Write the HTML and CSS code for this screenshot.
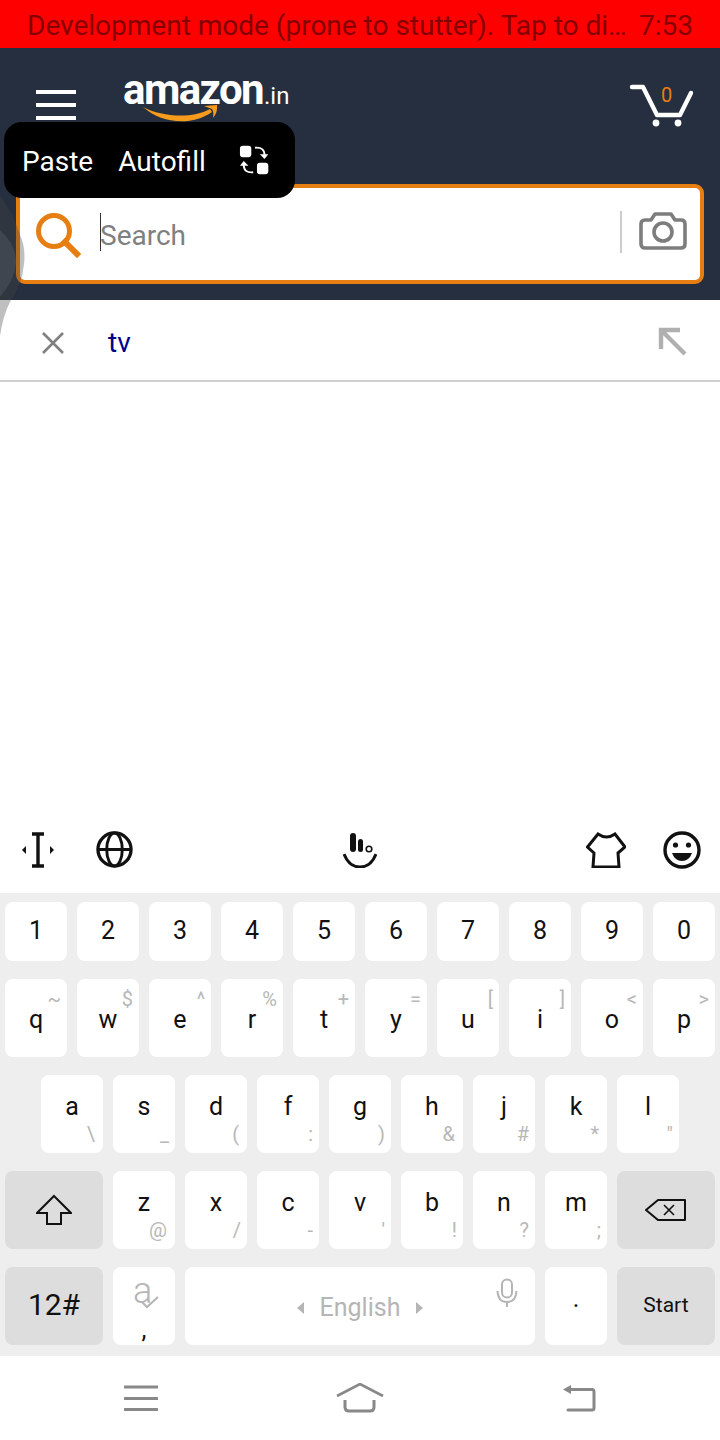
FILE: index.html
```html
<!DOCTYPE html>
<html lang="en">
<head>
<meta charset="utf-8">
<title>Amazon search</title>
<link rel="stylesheet" href="styles.css">
</head>
<body>
<div class="screen">
  <div class="dev-banner"><span class="dev-text">Development mode (prone to stutter). Tap to di…</span><span class="dev-time">7:53</span></div>

  <header class="app-header">
    <div class="top-row">
      <div class="burger"><i></i><i></i><i></i></div>
      <div class="logo">
        <span class="logo-word">amazon</span><span class="logo-in">.in</span>
        <svg class="logo-smile" width="80" height="20" viewBox="0 0 80 20"><path d="M1 4 C20 14 50 16 68 6 L70 9 C50 23 20 21 1 4 Z" fill="#f79b1c"/><path d="M62 3 L75 2 Q76 9 71 15 Q72 9 70 6 Z" fill="#f79b1c"/></svg>
      </div>
      <div class="cart">
        <svg width="64" height="44" viewBox="0 0 64 44"><path d="M3 3 H14 L28 31 H51 L62 9" fill="none" stroke="#fff" stroke-width="4.400" stroke-linecap="round" stroke-linejoin="round"/><circle cx="27" cy="39" r="3.400" fill="#fff"/><circle cx="49" cy="39" r="3.400" fill="#fff"/></svg>
        <span class="cart-count">0</span>
      </div>
    </div>
    <div class="search-box">
      <svg class="search-icon" width="46" height="46" viewBox="0 0 46 46"><circle cx="19" cy="19" r="15.500" fill="none" stroke="#e67e12" stroke-width="5"/><path d="M30 30 L42 42" stroke="#e67e12" stroke-width="6" stroke-linecap="square"/></svg>
      <span class="caret"></span>
      <span class="search-text">Search</span>
      <span class="search-divider"></span>
      <svg class="camera" width="50" height="40" viewBox="0 0 50 40"><path d="M3 13 Q3 9 7 9 H13 L17 3 H33 L37 9 H43 Q47 9 47 13 V33 Q47 37 43 37 H7 Q3 37 3 33 Z" fill="none" stroke="#7d7d7d" stroke-width="3.600" stroke-linejoin="round"/><circle cx="25" cy="21" r="9" fill="none" stroke="#7d7d7d" stroke-width="3.600"/></svg>
    </div>
  </header>

  <svg class="ghost" width="26" height="150" viewBox="0 0 26 150"><path d="M0 5 Q14 25 20 45 Q26 58 24 74 Q22 94 11 110 Q3 125 0 146 Z" fill="#424242" opacity=".34"/><path d="M0 40 Q16 55 16 72 Q15 90 0 107 Z" fill="#c8c8c8" opacity=".11"/></svg>

  <div class="paste-menu">
    <span>Paste</span><span>Autofill</span>
    <svg width="32" height="32" viewBox="0 0 32 32"><rect x="1" y="1" width="12" height="12" rx="3" fill="#fff"/><rect x="19" y="19" width="12" height="12" rx="3" fill="#fff"/><path d="M17 3 Q27 2 27 11" fill="none" stroke="#fff" stroke-width="2"/><path d="M22 10 H31 L27 15 Z" fill="#fff"/><path d="M15 29 Q5 30 5 21" fill="none" stroke="#fff" stroke-width="2"/><path d="M1 22 H10 L5 17 Z" fill="#fff"/></svg>
  </div>

  <div class="suggestion">
    <svg width="24" height="24" viewBox="0 0 24 24"><path d="M2 2 L22 22 M22 2 L2 22" stroke="#808080" stroke-width="2.600"/></svg>
    <span class="suggestion-text">tv</span>
    <svg class="fill-arrow" width="30" height="30" viewBox="0 0 30 30"><path d="M22 3 H3 V22 M3 3 L27 27" fill="none" stroke="#b0b0b0" stroke-width="4.400"/></svg>
  </div>

  <div class="blank"></div>

  <div class="kb-tools">
    <svg class="t-cursor" width="32" height="36" viewBox="0 0 32 36"><path d="M10 2 H22 M10 34 H22 M16 2 V34" fill="none" stroke="#111" stroke-width="3.400"/><path d="M4 14 V22 L0 18 Z M28 14 V22 L32 18 Z" fill="#111"/></svg>
    <svg class="t-globe" width="37" height="37" viewBox="0 0 38 38"><circle cx="19" cy="19" r="17" fill="none" stroke="#111" stroke-width="3.400"/><ellipse cx="19" cy="19" rx="8" ry="17" fill="none" stroke="#111" stroke-width="3"/><path d="M2 19 H36" stroke="#111" stroke-width="3"/></svg>
    <svg class="t-hand" width="34" height="36" viewBox="0 0 34 36"><path d="M10 4 V17" stroke="#111" stroke-width="6" stroke-linecap="round"/><path d="M17.500 9.500 V17.500" stroke="#111" stroke-width="5" stroke-linecap="round"/><circle cx="26" cy="17" r="2.800" fill="none" stroke="#111" stroke-width="1.600"/><path d="M1 22 Q6 35 17 35 Q28 35 33 22" fill="none" stroke="#111" stroke-width="3"/></svg>
    <svg class="t-shirt" width="40" height="36" viewBox="0 0 40 36"><path d="M1.500 15 L12 2 Q20.500 8 29 2 L39 15 L32 21 L33 35 H7 L8 21 Z" fill="none" stroke="#111" stroke-width="3"/></svg>
    <svg class="t-smile" width="38" height="38" viewBox="0 0 38 38"><circle cx="19" cy="19" r="17" fill="none" stroke="#111" stroke-width="3.400"/><circle cx="12.500" cy="14" r="2.600" fill="#111"/><circle cx="25.500" cy="14" r="2.600" fill="#111"/><path d="M9 22 H29 Q26 30 19 30 Q12 30 9 22 Z" fill="#111"/></svg>
  </div>

  <div class="keyboard">
    <div class="kb-row">
      <div class="key num">1</div><div class="key num">2</div><div class="key num">3</div><div class="key num">4</div><div class="key num">5</div><div class="key num">6</div><div class="key num">7</div><div class="key num">8</div><div class="key num">9</div><div class="key num">0</div>
    </div>
    <div class="kb-row tall">
      <div class="key up">q<span class="sub top">~</span></div>
      <div class="key up">w<span class="sub top">$</span></div>
      <div class="key up">e<span class="sub top">^</span></div>
      <div class="key up">r<span class="sub top">%</span></div>
      <div class="key up">t<span class="sub top">+</span></div>
      <div class="key up">y<span class="sub top">=</span></div>
      <div class="key up">u<span class="sub top">[</span></div>
      <div class="key up">i<span class="sub top">]</span></div>
      <div class="key up">o<span class="sub top">&lt;</span></div>
      <div class="key up">p<span class="sub top">&gt;</span></div>
    </div>
    <div class="kb-row tall inset">
      <div class="key">a<span class="sub bottom far">\</span></div>
      <div class="key">s<span class="sub bottom">_</span></div>
      <div class="key">d<span class="sub bottom far">(</span></div>
      <div class="key">f<span class="sub bottom">:</span></div>
      <div class="key">g<span class="sub bottom">)</span></div>
      <div class="key">h<span class="sub bottom far">&amp;</span></div>
      <div class="key">j<span class="sub bottom">#</span></div>
      <div class="key">k<span class="sub bottom far">*</span></div>
      <div class="key">l<span class="sub bottom">"</span></div>
    </div>
    <div class="kb-row tall">
      <div class="key wide dark center">
        <svg width="36" height="32" viewBox="0 0 36 32"><path d="M18 2 L35 19 H25 V30 H11 V19 H1 Z" fill="none" stroke="#111" stroke-width="2"/></svg>
      </div>
      <div class="key">z<span class="sub bottom far">@</span></div>
      <div class="key">x<span class="sub bottom">/</span></div>
      <div class="key">c<span class="sub bottom">-</span></div>
      <div class="key">v<span class="sub bottom">'</span></div>
      <div class="key">b<span class="sub bottom">!</span></div>
      <div class="key">n<span class="sub bottom">?</span></div>
      <div class="key">m<span class="sub bottom">;</span></div>
      <div class="key wide dark center">
        <svg width="42" height="24" viewBox="0 0 42 24"><path d="M1 12 L13 2 H40 V22 H13 Z" fill="none" stroke="#111" stroke-width="2" stroke-linejoin="round"/><path d="M19 7 L29 17 M29 7 L19 17" stroke="#111" stroke-width="1.600"/></svg>
      </div>
    </div>
    <div class="kb-row tall">
      <div class="key wide dark sym">12#</div>
      <div class="key accent"><span class="accent-a">a</span><svg class="accent-check" width="18" height="14" viewBox="0 0 18 14"><path d="M1 7 L6 12 L17 2" fill="none" stroke="#b5b5b5" stroke-width="2"/></svg><span class="accent-comma">,</span></div>
      <div class="key space">
        <svg width="8" height="12" viewBox="0 0 8 12"><path d="M7 0 V12 L0 6 Z" fill="#b5b5b5"/></svg>
        <span class="space-label">English</span>
        <svg width="8" height="12" viewBox="0 0 8 12"><path d="M1 0 V12 L8 6 Z" fill="#b5b5b5"/></svg>
        <svg class="mic" width="22" height="30" viewBox="0 0 22 30"><rect x="6" y="1.500" width="10" height="18" rx="5" fill="none" stroke="#b5b5b5" stroke-width="2"/><path d="M1.500 13 Q2 24 11 24 Q20 24 20.500 13 M11 24 V29" fill="none" stroke="#b5b5b5" stroke-width="2"/></svg>
      </div>
      <div class="key">.</div>
      <div class="key wide dark start">Start</div>
    </div>
  </div>

  <nav class="nav-bar">
    <svg width="34" height="26" viewBox="0 0 34 26"><path d="M1 2 H33 M1 13.500 H33 M1 24.500 H33" stroke="#888" stroke-width="3" stroke-linecap="round"/></svg>
    <svg width="48" height="30" viewBox="0 0 48 30"><path d="M1 13 L24 1 L47 13" fill="none" stroke="#888" stroke-width="2.600"/><path d="M9 17 V24 Q9 28 13 28 H34 Q38 28 38 24 V17" fill="none" stroke="#888" stroke-width="3"/></svg>
    <svg width="34" height="28" viewBox="0 0 34 28"><path d="M8 5.500 H30 Q32 5.500 32 8 V24 Q32 26 30 26 H6" fill="none" stroke="#888" stroke-width="3" stroke-linecap="round"/><path d="M9 1 V10 L1 5.500 Z" fill="#888"/></svg>
  </nav>
</div>
</body>
</html>
```
FILE: styles.css
```css
* { box-sizing: border-box; }
html, body { margin: 0; padding: 0; background: #fff; }
body { font-family: Roboto, "Liberation Sans", sans-serif; }
.screen { position: relative; width: 720px; height: 1440px; overflow: hidden; display: flex; flex-direction: column; background: #fff; }

.dev-banner { flex: none; height: 48px; background: #ff0000; color: #850000; display: flex; align-items: center; justify-content: space-between; padding: 3px 27px 0 27px; font-size: 28px; line-height: 44px; white-space: nowrap; }

.app-header { flex: none; height: 252px; background: #252f3f; padding: 30px 16px 0; }
.top-row { display: flex; height: 106px; }
.burger { width: 40px; margin: 12px 0 0 20px; display: flex; flex-direction: column; gap: 9px; }
.burger i { display: block; height: 4px; background: #fff; }
.logo { position: relative; width: 170px; height: 50px; margin-left: 48px; color: #fff; white-space: nowrap; }
.logo-word { font-weight: 700; font-size: 42px; line-height: 30px; letter-spacing: -1.600px; display: inline-block; margin: -3px 1px 0 -1px; }
.logo-in { font-size: 24px; line-height: 30px; font-weight: 400; }
.logo-smile { position: absolute; left: 18px; top: 25px; }
.cart { position: relative; width: 64px; height: 44px; margin: 6px 11px 0 auto; }
.cart svg { display: block; }
.cart-count { position: absolute; left: 32px; top: -1px; color: #e67e12; font-size: 20px; line-height: 24px; }

.search-box { height: 100px; background: #fff; border: 4px solid #e67e12; border-radius: 9px; display: flex; align-items: center; padding: 0 12px 0 15px; }
.search-icon { flex: none; margin-top: 2px; }
.caret { flex: none; width: 1px; height: 38px; background: #333; margin: 0 -1px 4px 19px; }
.search-text { flex: 1; font-size: 28px; line-height: 40px; color: #808080; margin-top: 4px; }
.search-divider { flex: none; width: 2px; height: 42px; background: #ccc; margin: -4px 16px 0 0; }
.camera { flex: none; margin-top: -6px; }

.paste-menu { position: absolute; left: 4px; top: 122px; width: 291px; height: 76px; background: #000; border-radius: 18px; color: #fff; display: flex; align-items: center; font-size: 28px; padding: 2px 26px 0 18px; gap: 25px; }
.paste-menu svg { margin: -2px 0 0 8px; }

.ghost { position: absolute; left: 0; top: 190px; }

.suggestion { flex: none; height: 82px; border-bottom: 2px solid #d0d0d0; display: flex; align-items: center; padding: 5px 32px 0 41px; }
.suggestion-text { flex: 1; margin-left: 43px; font-size: 28px; line-height: 32px; color: #00008b; font-weight: 400; }
.fill-arrow { flex: none; margin-top: -1px; }

.blank { flex: 1; }

.kb-tools { flex: none; height: 73px; display: flex; align-items: center; padding-bottom: 14px; }
.t-cursor { margin-left: 22px; }
.t-globe { margin-left: 42px; }
.t-hand { margin-left: 210px; }
.t-shirt { margin-left: 209px; }
.t-smile { margin-left: 37px; }

.keyboard { flex: none; height: 463px; background: #eeeeee; padding: 9px 5px 0; display: flex; flex-direction: column; gap: 18px; }
.kb-row { height: 59px; display: flex; gap: 10px; }
.kb-row.tall { height: 78px; }
.kb-row.inset { padding-left: 36px; }

.key { position: relative; flex: none; width: 62px; background: #fff; border-radius: 8px; color: #111; font-size: 25px; line-height: 28px; text-align: center; padding-top: 18px; }
.key.num { padding-top: 15px; }
.key.up { padding-top: 27px; }
.key.wide { width: 98px; }
.key.dark { background: #dddddd; }
.key.center { display: flex; align-items: center; justify-content: center; padding: 0; }
.key.sym { font-size: 30px; padding-top: 24px; }
.key.start { font-size: 21px; padding-top: 24px; }

.sub { position: absolute; right: 6px; color: #b8b8b8; font-size: 20px; line-height: 20px; }
.sub.top { top: 10px; }
.sub.bottom { bottom: 9px; }
.sub.far { right: 8px; }

.accent-a { position: absolute; left: 20px; top: 5px; font-size: 36px; line-height: 38px; color: #b5b5b5; font-weight: 300; }
.accent-check { position: absolute; left: 28px; top: 28px; }
.accent-comma { position: absolute; left: 0; right: 0; bottom: 3px; line-height: 24px; }

.key.space { flex: 1; width: auto; display: flex; align-items: center; justify-content: center; gap: 15px; padding: 4px 0 0; }
.space-label { color: #b5b5b5; font-size: 25px; }
.mic { position: absolute; right: 17px; top: 11px; }

.nav-bar { flex: none; height: 84px; display: flex; align-items: center; justify-content: space-between; padding: 0 124px 0 124px; }
```
